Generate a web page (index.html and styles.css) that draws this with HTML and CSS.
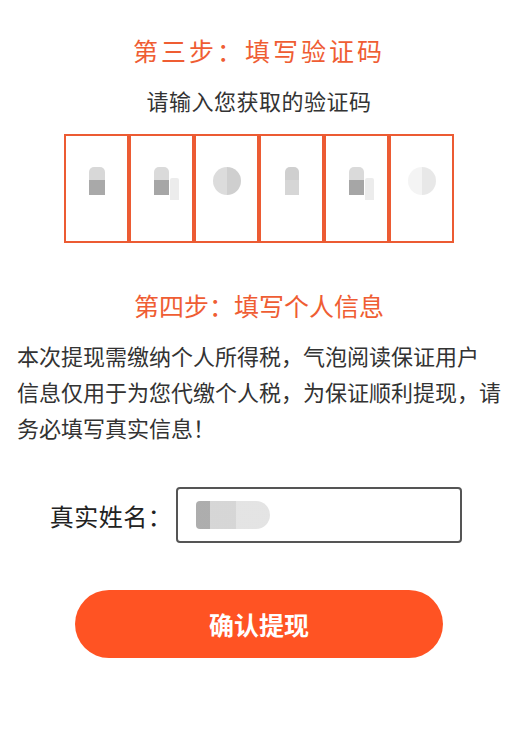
FILE: index.html
```html
<!DOCTYPE html>
<html lang="zh-CN">
<head>
    <meta charset="UTF-8">
    <meta name="viewport" content="width=device-width, initial-scale=1.0">
    <title>提现</title>
    <link rel="stylesheet" href="styles.css">
</head>
<body>

    <section class="step">
        <h2 class="step-title step-title-wide">第三步：填写验证码</h2>
        <p class="step-hint">请输入您获取的验证码</p>
        <div class="code-boxes">
            <div class="code-box"><span class="blur b1"></span></div>
            <div class="code-box"><span class="blur b2"></span></div>
            <div class="code-box"><span class="blur b3"></span></div>
            <div class="code-box"><span class="blur b4"></span></div>
            <div class="code-box"><span class="blur b2"></span></div>
            <div class="code-box"><span class="blur b6"></span></div>
        </div>
    </section>

    <section class="step step-info">
        <h2 class="step-title">第四步：填写个人信息</h2>
        <p class="notice">本次提现需缴纳个人所得税，气泡阅读保证用户<br>信息仅用于为您代缴个人税，为保证顺利提现，请<br>务必填写真实信息！</p>

        <form class="name-form">
            <div class="name-row">
                <label for="realname">真实姓名：</label>
                <div class="name-input" id="realname"><span class="name-blur"></span></div>
            </div>
            <button type="button" class="submit-btn">确认提现</button>
        </form>
    </section>

</body>
</html>
```

FILE: styles.css
```css
body {
    margin: 0;
    background-color: #fff;
    font-family: "Noto Sans CJK SC", "Noto Sans", sans-serif;
    color: #333;
}
.step {
    text-align: center;
}
.step-title {
    margin: 0;
    padding-top: 33px;
    font-size: 25px;
    line-height: 34px;
    font-weight: normal;
    color: #ef5d33;
}
.step-title-wide {
    letter-spacing: 3px;
}
.step-hint {
    margin: 20px 0 0;
    font-size: 22px;
    line-height: 26px;
    letter-spacing: 0.5px;
}
.code-boxes {
    display: flex;
    justify-content: center;
    margin-top: 21px;
}
.code-box {
    width: 65px;
    height: 109px;
    border: 2px solid #ec5b33;
    display: flex;
    align-items: center;
    justify-content: center;
    padding-bottom: 16px;
    box-sizing: border-box;
}
.blur {
    display: block;
    width: 28px;
    height: 28px;
    border-radius: 50%;
}
.b1 {
    width: 16px;
    border-radius: 5px 5px 0 0;
    background: linear-gradient(to bottom, #d8d8d8 0 45%, #a9a9a9 45%);
}
.b2 {
    width: 15px;
    border-radius: 5px 5px 0 0;
    background: linear-gradient(to bottom, #dadada 0 45%, #a6a6a6 45%);
    box-shadow: 13px 8px 0 -3px #ececec;
}
.b3 {
    background: linear-gradient(to right, #dcdcdc 0 50%, #cfcfcf 50%);
}
.b4 {
    width: 14px;
    border-radius: 5px 5px 0 0;
    background: linear-gradient(to bottom, #cfcfcf 0 45%, #d6d6d6 45%);
}
.b6 {
    background: linear-gradient(to right, #f4f4f4 0 50%, #e8e8e8 50%);
}
.step-info {
    padding-top: 12px;
}
.notice {
    margin: 15px 0 0;
    padding: 0 12px 0 17px;
    text-align: left;
    font-size: 22px;
    line-height: 36px;
}
.name-form {
    margin-top: 42px;
}
.name-row {
    display: flex;
    align-items: center;
    justify-content: center;
    gap: 4px;
    padding-right: 6px;
}
.name-row label {
    font-size: 24px;
    color: #222;
    letter-spacing: 0.5px;
}
.name-input {
    width: 286px;
    height: 56px;
    border: 2px solid #555;
    border-radius: 4px;
    display: flex;
    align-items: center;
    padding-left: 18px;
    box-sizing: border-box;
}
.name-blur {
    display: block;
    width: 74px;
    height: 28px;
    border-radius: 4px 14px 14px 4px;
    background: linear-gradient(to right, #999 0 14px, #ccc 14px 40px, #ddd 40px);
    opacity: 0.8;
}
.submit-btn {
    display: block;
    margin: 47px auto 0;
    width: 368px;
    height: 68px;
    border: none;
    border-radius: 34px;
    background-color: #ff5323;
    color: #fff;
    font-family: inherit;
    font-size: 25px;
    font-weight: bold;
    cursor: pointer;
}
```
